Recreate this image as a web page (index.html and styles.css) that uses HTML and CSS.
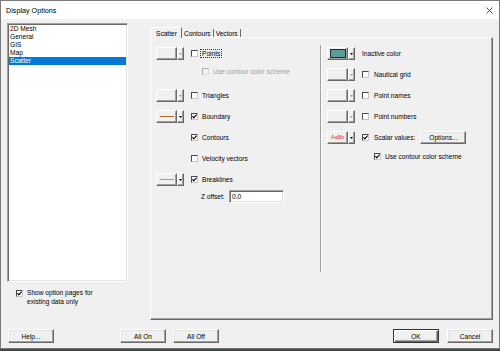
FILE: index.html
```html
<!DOCTYPE html>
<html>
<head>
<meta charset="utf-8">
<link rel="stylesheet" href="styles.css">
</head>
<body>
<div class="window">
  <div class="titlebar">
    <span class="title">Display Options</span>
    <svg class="close" width="7" height="7" viewBox="0 0 7 7"><path d="M0.5 0.5 L6.5 6.5 M6.5 0.5 L0.5 6.5" stroke="#222" stroke-width="0.8" fill="none"/></svg>
  </div>
  <div class="main">
    <div class="left">
      <div class="list">
        <div class="item">2D Mesh</div>
        <div class="item">General</div>
        <div class="item">GIS</div>
        <div class="item">Map</div>
        <div class="item sel">Scatter</div>
      </div>
      <div class="showopt">
        <span class="cb checked"><svg width="5" height="5" viewBox="0 0 5 5"><path d="M0.4 2.2 L1.8 3.8 L4.6 0.6" stroke="#000" stroke-width="1.1" fill="none"/></svg></span>
        <span class="showtext">Show option pages for<br>existing data only</span>
      </div>
    </div>
    <div class="tabs">
      <div class="tabrow">
        <div class="tab sel">Scatter</div>
        <div class="tab">Contours</div>
        <div class="tab">Vectors</div>
      </div>
      <div class="panel">
        <div class="lcol">
          <div class="row">
            <span class="cbtn"><span class="cmain"></span><span class="carrow"><svg width="3" height="2" viewBox="0 0 3 2"><polygon points="0,0 3,0 1.5,2" fill="#a0a0a0"/></svg></span></span>
            <span class="cb"></span><span class="focus">Points</span>
          </div>
          <div class="row r-usel">
            <span class="cb dis"></span><span class="distext">Use contour color scheme</span>
          </div>
          <div class="row r-tri">
            <span class="cbtn"><span class="cmain"></span><span class="carrow"><svg width="3" height="2" viewBox="0 0 3 2"><polygon points="0,0 3,0 1.5,2" fill="#a0a0a0"/></svg></span></span>
            <span class="cb"></span><span>Triangles</span>
          </div>
          <div class="row r-gap">
            <span class="cbtn"><span class="cmain"><span class="line brown"></span></span><span class="carrow"><svg width="3" height="2" viewBox="0 0 3 2"><polygon points="0,0 3,0 1.5,2" fill="#000"/></svg></span></span>
            <span class="cb checked"><svg width="5" height="5" viewBox="0 0 5 5"><path d="M0.4 2.2 L1.8 3.8 L4.6 0.6" stroke="#000" stroke-width="1.1" fill="none"/></svg></span><span>Boundary</span>
          </div>
          <div class="row r-gap r-nobtn">
            <span class="cb checked"><svg width="5" height="5" viewBox="0 0 5 5"><path d="M0.4 2.2 L1.8 3.8 L4.6 0.6" stroke="#000" stroke-width="1.1" fill="none"/></svg></span><span>Contours</span>
          </div>
          <div class="row r-gap r-nobtn">
            <span class="cb"></span><span>Velocity vectors</span>
          </div>
          <div class="row r-gap">
            <span class="cbtn"><span class="cmain"><span class="line purple"></span></span><span class="carrow"><svg width="3" height="2" viewBox="0 0 3 2"><polygon points="0,0 3,0 1.5,2" fill="#000"/></svg></span></span>
            <span class="cb checked"><svg width="5" height="5" viewBox="0 0 5 5"><path d="M0.4 2.2 L1.8 3.8 L4.6 0.6" stroke="#000" stroke-width="1.1" fill="none"/></svg></span><span>Breaklines</span>
          </div>
          <div class="row r-z">
            <span class="zlabel">Z offset:</span><span class="input">0.0</span>
          </div>
        </div>
        <div class="sep"></div>
        <div class="rcol">
          <div class="row">
            <span class="cbtn"><span class="cmain pressed"><span class="swatch"></span></span><span class="carrow"><svg width="3" height="2" viewBox="0 0 3 2"><polygon points="0,0 3,0 1.5,2" fill="#000"/></svg></span></span>
            <span>Inactive color</span>
          </div>
          <div class="row r-gap">
            <span class="cbtn"><span class="cmain"></span><span class="carrow"><svg width="3" height="2" viewBox="0 0 3 2"><polygon points="0,0 3,0 1.5,2" fill="#a0a0a0"/></svg></span></span>
            <span class="cb rcb"></span><span>Nautical grid</span>
          </div>
          <div class="row r-gap">
            <span class="cbtn"><span class="cmain"></span><span class="carrow"><svg width="3" height="2" viewBox="0 0 3 2"><polygon points="0,0 3,0 1.5,2" fill="#a0a0a0"/></svg></span></span>
            <span class="cb rcb"></span><span>Point names</span>
          </div>
          <div class="row r-gap">
            <span class="cbtn"><span class="cmain"></span><span class="carrow"><svg width="3" height="2" viewBox="0 0 3 2"><polygon points="0,0 3,0 1.5,2" fill="#a0a0a0"/></svg></span></span>
            <span class="cb rcb"></span><span>Point numbers</span>
          </div>
          <div class="row r-gap">
            <span class="cbtn"><span class="cmain"><span class="aabb">AaBb</span></span><span class="carrow"><svg width="3" height="2" viewBox="0 0 3 2"><polygon points="0,0 3,0 1.5,2" fill="#000"/></svg></span></span>
            <span class="cb rcb checked"><svg width="5" height="5" viewBox="0 0 5 5"><path d="M0.4 2.2 L1.8 3.8 L4.6 0.6" stroke="#000" stroke-width="1.1" fill="none"/></svg></span><span>Scalar values:</span>
            <span class="btn obtn">Options...</span>
          </div>
          <div class="row r-user">
            <span class="cb checked"><svg width="5" height="5" viewBox="0 0 5 5"><path d="M0.4 2.2 L1.8 3.8 L4.6 0.6" stroke="#000" stroke-width="1.1" fill="none"/></svg></span><span>Use contour color scheme</span>
          </div>
        </div>
      </div>
    </div>
  </div>
  <div class="bottom">
    <span class="btn">Help...</span>
    <span class="btn b-allon">All On</span>
    <span class="btn b-alloff">All Off</span>
    <span class="btn default b-ok">OK</span>
    <span class="btn b-cancel">Cancel</span>
  </div>
</div>
</body>
</html>
```

FILE: styles.css
```css
body {
  margin: 0;
  background: #3d4b45;
  font-family: "Liberation Sans", Arial, sans-serif;
  font-size: 6.6px;
  color: #000;
}
.window {
  width: 500px;
  height: 349px;
  box-sizing: border-box;
  border: 1px solid #7a7a7a;
  background: #f0f0f0;
  display: flex;
  flex-direction: column;
}
.titlebar {
  height: 18px;
  flex: none;
  background: #fff;
  display: flex;
  align-items: center;
  justify-content: space-between;
  padding: 0 6px 0 5px;
}
.title { font-size: 7.2px; }
.close { display: block; }

.main {
  height: 301px;
  flex: none;
  box-sizing: border-box;
  padding: 4px 0 0 6px;
  display: flex;
}
.left {
  width: 121px;
  display: flex;
  flex-direction: column;
}
.list {
  height: 259px;
  box-sizing: border-box;
  background: #fff;
  border: 1px solid;
  border-color: #a0a0a0 #fff #fff #a0a0a0;
  box-shadow: inset 1px 1px 0 #696969, inset -1px -1px 0 #e3e3e3;
  padding: 1px;
}
.item {
  height: 8px;
  line-height: 8px;
  padding-left: 1px;
  white-space: nowrap;
}
.item.sel { background: #0078d7; color: #fff; }
.showopt {
  display: flex;
  align-items: flex-start;
  margin-top: 7px;
  padding-left: 9px;
}
.showopt .cb { margin-top: 1px; }
.showtext { line-height: 8.5px; margin-left: 0; }

.tabs {
  width: 343px;
  margin-left: 22px;
  margin-top: 4px;
  display: flex;
  flex-direction: column;
}
.tabrow {
  height: 10px;
  display: flex;
  position: relative;
  z-index: 1;
}
.tab {
  margin-top: 2px;
  height: 8px;
  line-height: 9px;
  padding: 0 2px 0 1px;
  border-right: 1px solid #696969;
  white-space: nowrap;
}
.tab + .tab { padding-left: 2px; }
.tab.sel {
  margin-top: 0;
  height: 11px;
  line-height: 12px;
  padding: 0 4px 0 5px;
  border-left: 1px solid #fff;
  border-top: 1px solid #fff;
  box-sizing: border-box;
  background: #f0f0f0;
}
.panel {
  height: 283px;
  box-sizing: border-box;
  border: 1px solid;
  border-color: #fff #696969 #696969 #fff;
  box-shadow: inset -1px -1px 0 #a0a0a0;
  display: flex;
  padding: 9px 0 0 5px;
}
.lcol {
  width: 164px;
  display: flex;
  flex-direction: column;
}
.sep {
  width: 1px;
  height: 227px;
  margin-top: -2px;
  background: #a0a0a0;
  border-right: 1px solid #fff;
}
.rcol {
  margin-left: 5px;
  display: flex;
  flex-direction: column;
}
.row {
  height: 13px;
  flex: none;
  display: flex;
  align-items: center;
  white-space: nowrap;
}
.r-gap { margin-top: 8px; }
.r-usel { margin-top: 5px; padding-left: 46px; }
.r-tri { margin-top: 11px; }
.r-nobtn { padding-left: 35px; }
.r-z { margin-top: 4px; padding-left: 45px; }
.r-user { margin-top: 6px; padding-left: 47px; }

.cbtn {
  width: 28px;
  height: 13px;
  flex: none;
  display: flex;
  margin-right: 7px;
}
.cmain, .carrow {
  box-sizing: border-box;
  border: 1px solid;
  border-color: #fff #696969 #696969 #fff;
  box-shadow: inset -1px -1px 0 #a0a0a0;
  display: flex;
  align-items: center;
  justify-content: center;
}
.cmain { width: 21px; }
.carrow { width: 7px; }
.carrow svg { display: block; }
.line { display: block; width: 14px; height: 1px; margin-bottom: 1px; }
.brown { background: #b8682a; }
.purple { background: #a98bd6; }
.swatch {
  display: block;
  width: 16px;
  height: 9px;
  margin-bottom: 1px;
  background: #5e9d97;
  border: 1px solid #1e2e2c;
  box-sizing: border-box;
}
.aabb { color: #e53838; font-size: 5.6px; margin-bottom: 1px; }

.cb {
  width: 7px;
  height: 7px;
  flex: none;
  box-sizing: border-box;
  border: 1px solid;
  border-color: #4a4a4a #c8c8c8 #c8c8c8 #4a4a4a;
  background: #fff;
  margin-right: 4px;
  display: flex;
  align-items: center;
  justify-content: center;
}
.cb svg { display: block; }
.rcb { margin-right: 5px; }
.cb.dis { border-color: #b0b0b0 #dcdcdc #dcdcdc #b0b0b0; background: #f0f0f0; }
.distext { color: #a0a0a0; }
.focus { outline: 1px dotted #333; outline-offset: 0; padding: 0 1px; margin-left: -1px; }

.zlabel { width: 28px; }
.input {
  width: 55px;
  height: 13px;
  box-sizing: border-box;
  background: #fff;
  border: 1px solid;
  border-color: #a0a0a0 #fff #fff #a0a0a0;
  box-shadow: inset 1px 1px 0 #696969, inset -1px -1px 0 #e3e3e3;
  padding-left: 2px;
  line-height: 11px;
}

.btn {
  width: 46px;
  height: 14px;
  box-sizing: border-box;
  flex: none;
  border: 1px solid;
  border-color: #fff #696969 #696969 #fff;
  box-shadow: inset -1px -1px 0 #a0a0a0, inset 1px 1px 0 #e3e3e3;
  background: #f0f0f0;
  display: flex;
  align-items: center;
  justify-content: center;
  white-space: nowrap;
}
.obtn { height: 13px; margin-left: 5px; }
.btn.default {
  border-color: #333;
  box-shadow: inset 1px 1px 0 #fff, inset -1px -1px 0 #696969, inset -2px -2px 0 #a0a0a0;
}
.bottom {
  display: flex;
  margin-top: 9px;
  padding: 0 6px 0 7px;
}
.b-allon { margin-left: 66px; }
.b-alloff { margin-left: 7px; }
.b-ok { margin-left: auto; }
.b-cancel { margin-left: 8px; }
```
